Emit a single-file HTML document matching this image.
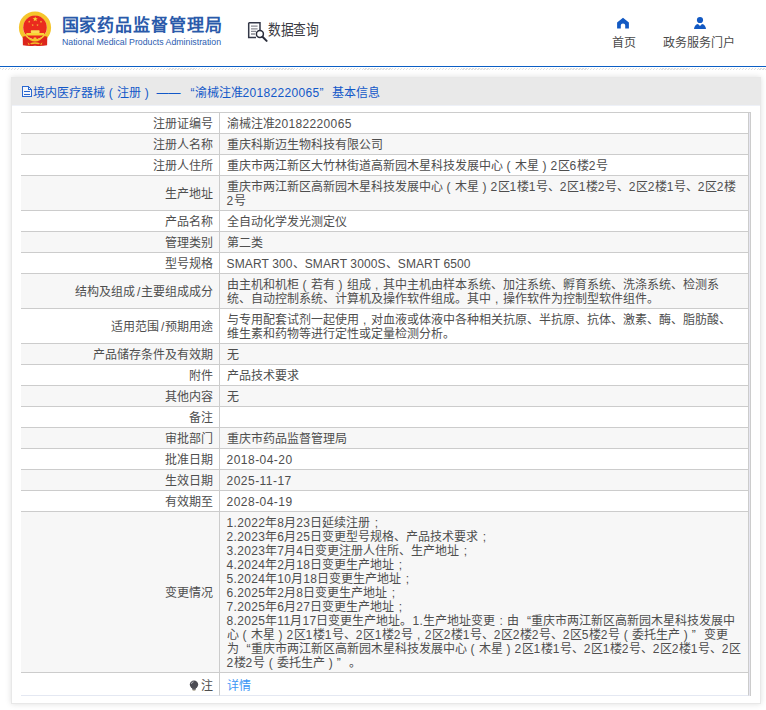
<!DOCTYPE html>
<html lang="zh-CN">
<head>
<meta charset="utf-8">
<title>数据查询</title>
<style>
html,body{margin:0;padding:0;}
body{width:766px;height:710px;overflow:hidden;background:#fff;position:relative;font-family:"Liberation Sans",sans-serif;color:#4e4e4e;}
.abs{position:absolute;white-space:nowrap;}
#logo{left:17px;top:9px;width:36px;height:40px;}
#title{left:61.5px;top:14px;font-size:17px;letter-spacing:.9px;line-height:24px;font-weight:bold;color:#2a5aaa;}
#sub{left:62px;top:36px;font-size:8.75px;line-height:12px;color:#2c5db0;}
#dq-ico{left:246px;top:19px;width:22px;height:24px;}
#dq{left:267.5px;top:19px;font-size:15.2px;line-height:22px;color:#3a3a42;transform:scaleX(.84);transform-origin:0 0;}
.nav{font-size:12px;line-height:16px;color:#4a4a4a;text-align:center;}
#hr1{left:0;top:66px;width:766px;height:1px;background:#0b5ec4;}
#hr2{left:-1px;top:67.5px;width:768px;height:2.5px;background:repeating-linear-gradient(135deg,#fff 0,#fff 1.2px,#dedede 1.2px,#dedede 2.1px);}
#panel{left:11px;top:77px;width:748px;height:625px;border:1px solid #e8e8e8;background:#fff;box-shadow:0 0 6px rgba(0,0,0,.13);}
#phead{left:0;top:0;width:748px;height:26.5px;background:#e9e9e9;border-bottom:1px solid #eef1f8;}
#ptitle{left:20.7px;top:7px;word-spacing:.6px;font-size:12px;line-height:16px;color:#1258c8;}
table{position:absolute;left:21px;top:112px;width:730px;border-collapse:separate;border-spacing:0;border-top:1px solid #ccc;border-right:1px solid #ccc;table-layout:fixed;font-size:12px;line-height:14px;}
td{padding:4px 5px 2px 6.6px;border-bottom:1px solid #ccc;vertical-align:middle;white-space:nowrap;overflow:hidden;}
td.k{width:184px;text-align:right;border-right:1px solid #ccc;padding:4px 5.6px 2px 8px;}
td.v{border-right:1px solid #ccc;}
tr:nth-child(even) td{background:#f7f7f7;}
tr.last td{border-bottom-color:#e4e8f2;height:16px;padding-top:5px;padding-bottom:1px;}
a{color:#3d96f5;text-decoration:none;}
i{font-style:normal;display:inline-block;width:12px;}
i.p{text-align:center;}
i.ql{text-align:right;}
i.qr{text-align:left;}
.n{letter-spacing:.33px;}
.n2{letter-spacing:.12px;}
.sl{padding:0 1.2px 0 1.5px;}
.d{letter-spacing:.46px;}
</style>
</head>
<body>
<svg class="abs" id="logo" viewBox="0 0 36 40">
<circle cx="18" cy="18.6" r="14" fill="none" stroke="#f5c52c" stroke-width="4.2"/>
<path d="M5.7 27.7 L8.5 27 Q18 38 27.5 27 L30.3 27.7 L30.1 36.3 Q24 37.5 18 36.7 Q12 37.5 5.9 36.3 Z" fill="#dc261c"/>
<circle cx="18" cy="18.4" r="11.8" fill="#ea2a1e"/>
<path d="M7.9 25.6 Q18 36.6 28.1 25.6" fill="none" stroke="#f5c52c" stroke-width="1.2"/>
<circle cx="18" cy="29.9" r="1.7" fill="#f5c52c"/>
<path d="M13 34.3 Q18 32.4 23 34.3 L21.6 35.3 Q18 34.2 14.4 35.3 Z" fill="#f2c02a"/>
<path d="M10.6 33.3 L12.6 35 L12 36.6 L11.2 35 Z M25.4 33.3 L23.4 35 L24 36.6 L24.8 35 Z" fill="#f2c02a"/>
<rect x="13.8" y="21.3" width="8.8" height="2.7" rx=".7" fill="#f9dc55"/>
<rect x="9.2" y="24" width="18" height="2.4" rx=".4" fill="#f8d535"/>
<polygon points="18.20,7.40 18.87,9.18 20.77,9.27 19.28,10.45 19.79,12.28 18.20,11.23 16.61,12.28 17.12,10.45 15.63,9.27 17.53,9.18" fill="#f7d53a"/><polygon points="12.20,11.50 12.50,12.29 13.34,12.33 12.68,12.86 12.91,13.67 12.20,13.20 11.49,13.67 11.72,12.86 11.06,12.33 11.90,12.29" fill="#f7d53a"/><polygon points="24.00,11.50 24.30,12.29 25.14,12.33 24.48,12.86 24.71,13.67 24.00,13.20 23.29,13.67 23.52,12.86 22.86,12.33 23.70,12.29" fill="#f7d53a"/><polygon points="15.70,14.90 16.00,15.69 16.84,15.73 16.18,16.26 16.41,17.07 15.70,16.60 14.99,17.07 15.22,16.26 14.56,15.73 15.40,15.69" fill="#f7d53a"/><polygon points="20.50,14.90 20.80,15.69 21.64,15.73 20.98,16.26 21.21,17.07 20.50,16.60 19.79,17.07 20.02,16.26 19.36,15.73 20.20,15.69" fill="#f7d53a"/>
</svg>
<svg class="abs" id="dq-ico" viewBox="0 0 22 24">
<path d="M2.7 3.7 H14 V12.5 M2.7 3.7 V18.6 H10" fill="none" stroke="#343848" stroke-width="1.5"/>
<path d="M5 7.2 H11.6 M5 9.8 H11.6 M5 12.4 H10 M5 15 H9" stroke="#8a8c94" stroke-width="1.3"/>
<circle cx="13.9" cy="15.1" r="3.5" fill="#fff" stroke="#2a2d3a" stroke-width="1.5"/>
<path d="M16.5 17.8 L20.6 21.9" stroke="#2a2d3a" stroke-width="2" stroke-linecap="round"/>
</svg>
<svg class="abs" style="left:616px;top:17px;width:14px;height:13px" viewBox="0 0 14 13"><path d="M7 .8 L12.9 5.6 V11.6 H9.2 V8.3 Q9.2 6.6 7 6.6 Q4.8 6.6 4.8 8.3 V11.6 H1.1 V5.6 Z" fill="#1259c3"/></svg>
<svg class="abs" style="left:693px;top:16px;width:14px;height:14px" viewBox="0 0 14 14"><circle cx="7" cy="4" r="3.1" fill="#1259c3"/><path d="M1 13.1 Q1.3 8.6 5 7.9 L7 10 L9 7.9 Q12.7 8.6 13 13.1 Z" fill="#1259c3"/></svg>
<div class="abs" id="title">国家药品监督管理局</div>
<div class="abs" id="sub">National Medical Products Administration</div>
<div class="abs" id="dq">数据查询</div>
<div class="abs nav" style="left:611.5px;top:35px;">首页</div>
<div class="abs nav" style="left:663px;top:35px;">政务服务门户</div>
<div class="abs" id="hr1"></div>
<div class="abs" id="hr2"></div>
<div class="abs" id="panel">
  <div class="abs" id="phead"></div>
  <svg class="abs" style="left:10px;top:8px;width:11px;height:12px" viewBox="0 0 11 12" shape-rendering="crispEdges"><path d="M.5 .5 H6.5 L9.5 3.5 V10.5 H.5 Z" fill="#f4f6fb" stroke="#2a68d0" stroke-width="1"/><path d="M6.5 .5 V3.5 H9.5" fill="none" stroke="#2a68d0" stroke-width="1"/><path d="M2 5.5 H8 M2 8.5 H8" stroke="#2a68d0" stroke-width="1"/></svg>
  <div class="abs" id="ptitle">境内医疗器械<i class="p">(</i>注册<i class="p">)</i> —— <i class="ql" style="width:10px">“</i>渝械注准<span class="n">20182220065</span><i class="qr">”</i>基本信息</div>
</div>
<div class="abs" style="left:749px;top:113px;width:1px;height:583px;background:#e6e6f0;"></div>
<table>
<colgroup><col style="width:199px"><col><col style="width:1px"></colgroup>
<tr><td class="k">注册证编号</td><td class="v">渝械注准<span class="n">20182220065</span></td></tr>
<tr><td class="k">注册人名称</td><td class="v">重庆科斯迈生物科技有限公司</td></tr>
<tr><td class="k">注册人住所</td><td class="v">重庆市两江新区大竹林街道高新园木星科技发展中心<i class="p">(</i>木星<i class="p">)</i><span class="n">2</span>区<span class="n">6</span>楼<span class="n">2</span>号</td></tr>
<tr><td class="k">生产地址</td><td class="v">重庆市两江新区高新园木星科技发展中心<i class="p">(</i>木星<i class="p">)</i><span class="n">2</span>区<span class="n">1</span>楼<span class="n">1</span>号、<span class="n">2</span>区<span class="n">1</span>楼<span class="n">2</span>号、<span class="n">2</span>区<span class="n">2</span>楼<span class="n">1</span>号、<span class="n">2</span>区<span class="n">2</span>楼<br><span class="n">2</span>号</td></tr>
<tr><td class="k">产品名称</td><td class="v">全自动化学发光测定仪</td></tr>
<tr><td class="k">管理类别</td><td class="v">第二类</td></tr>
<tr><td class="k">型号规格</td><td class="v"><span class="n2">SMART 300、SMART 3000S、SMART 6500</span></td></tr>
<tr><td class="k">结构及组成<span class="sl">/</span>主要组成成分</td><td class="v">由主机和机柜<i class="p">(</i>若有<i class="p">)</i>组成<i class="p">,</i>其中主机由样本系统、加注系统、孵育系统、洗涤系统、检测系<br>统、自动控制系统、计算机及操作软件组成。其中<i class="p">,</i>操作软件为控制型软件组件。</td></tr>
<tr><td class="k">适用范围<span class="sl">/</span>预期用途</td><td class="v">与专用配套试剂一起使用<i class="p">,</i>对血液或体液中各种相关抗原、半抗原、抗体、激素、酶、脂肪酸、<br>维生素和药物等进行定性或定量检测分析。</td></tr>
<tr><td class="k">产品储存条件及有效期</td><td class="v">无</td></tr>
<tr><td class="k">附件</td><td class="v">产品技术要求</td></tr>
<tr><td class="k">其他内容</td><td class="v">无</td></tr>
<tr><td class="k">备注</td><td class="v">&nbsp;</td></tr>
<tr><td class="k">审批部门</td><td class="v">重庆市药品监督管理局</td></tr>
<tr><td class="k">批准日期</td><td class="v"><span class="d">2018-04-20</span></td></tr>
<tr><td class="k">生效日期</td><td class="v"><span class="d">2025-11-17</span></td></tr>
<tr><td class="k">有效期至</td><td class="v"><span class="d">2028-04-19</span></td></tr>
<tr><td class="k">变更情况</td><td class="v"><span class="n">1.2022</span>年<span class="n">8</span>月<span class="n">23</span>日延续注册<i class="p">;</i><br><span class="n">2.2023</span>年<span class="n">6</span>月<span class="n">25</span>日变更型号规格、产品技术要求<i class="p">;</i><br><span class="n">3.2023</span>年<span class="n">7</span>月<span class="n">4</span>日变更注册人住所、生产地址<i class="p">;</i><br><span class="n">4.2024</span>年<span class="n">2</span>月<span class="n">18</span>日变更生产地址<i class="p">;</i><br><span class="n">5.2024</span>年<span class="n">10</span>月<span class="n">18</span>日变更生产地址<i class="p">;</i><br><span class="n">6.2025</span>年<span class="n">2</span>月<span class="n">8</span>日变更生产地址<i class="p">;</i><br><span class="n">7.2025</span>年<span class="n">6</span>月<span class="n">27</span>日变更生产地址<i class="p">;</i><br><span class="n">8.2025</span>年<span class="n">11</span>月<span class="n">17</span>日变更生产地址。<span class="n">1.</span>生产地址变更<i class="p">:</i>由<i class="ql">“</i>重庆市两江新区高新园木星科技发展中<br>心<i class="p">(</i>木星<i class="p">)</i><span class="n">2</span>区<span class="n">1</span>楼<span class="n">1</span>号、<span class="n">2</span>区<span class="n">1</span>楼<span class="n">2</span>号<i class="p">,</i><span class="n">2</span>区<span class="n">2</span>楼<span class="n">1</span>号、<span class="n">2</span>区<span class="n">2</span>楼<span class="n">2</span>号、<span class="n">2</span>区<span class="n">5</span>楼<span class="n">2</span>号<i class="p">(</i>委托生产<i class="p">)</i><i class="qr">”</i>变更<br>为<i class="ql">“</i>重庆市两江新区高新园木星科技发展中心<i class="p">(</i>木星<i class="p">)</i><span class="n">2</span>区<span class="n">1</span>楼<span class="n">1</span>号、<span class="n">2</span>区<span class="n">1</span>楼<span class="n">2</span>号、<span class="n">2</span>区<span class="n">2</span>楼<span class="n">1</span>号、<span class="n">2</span>区<br><span class="n">2</span>楼<span class="n">2</span>号<i class="p">(</i>委托生产<i class="p">)</i><i class="qr">”</i>。</td></tr>
<tr class="last"><td class="k"><svg style="width:10px;height:12px;vertical-align:-1.5px;margin-right:2px" viewBox="0 0 10 12"><circle cx="5" cy="4.6" r="4.2" fill="#4b4b53"/><path d="M3 7.4 H7 L6.5 10 Q5 11.3 3.5 10 Z" fill="#55555c"/><path d="M2.4 3.8 Q2.8 2.1 4.5 1.8" fill="none" stroke="#c9c9cf" stroke-width=".9"/><path d="M3.6 10.2 H6.4" stroke="#d8d0b8" stroke-width=".9"/></svg>注</td><td class="v"><a>详情</a></td></tr>
</table>
</body>
</html>
